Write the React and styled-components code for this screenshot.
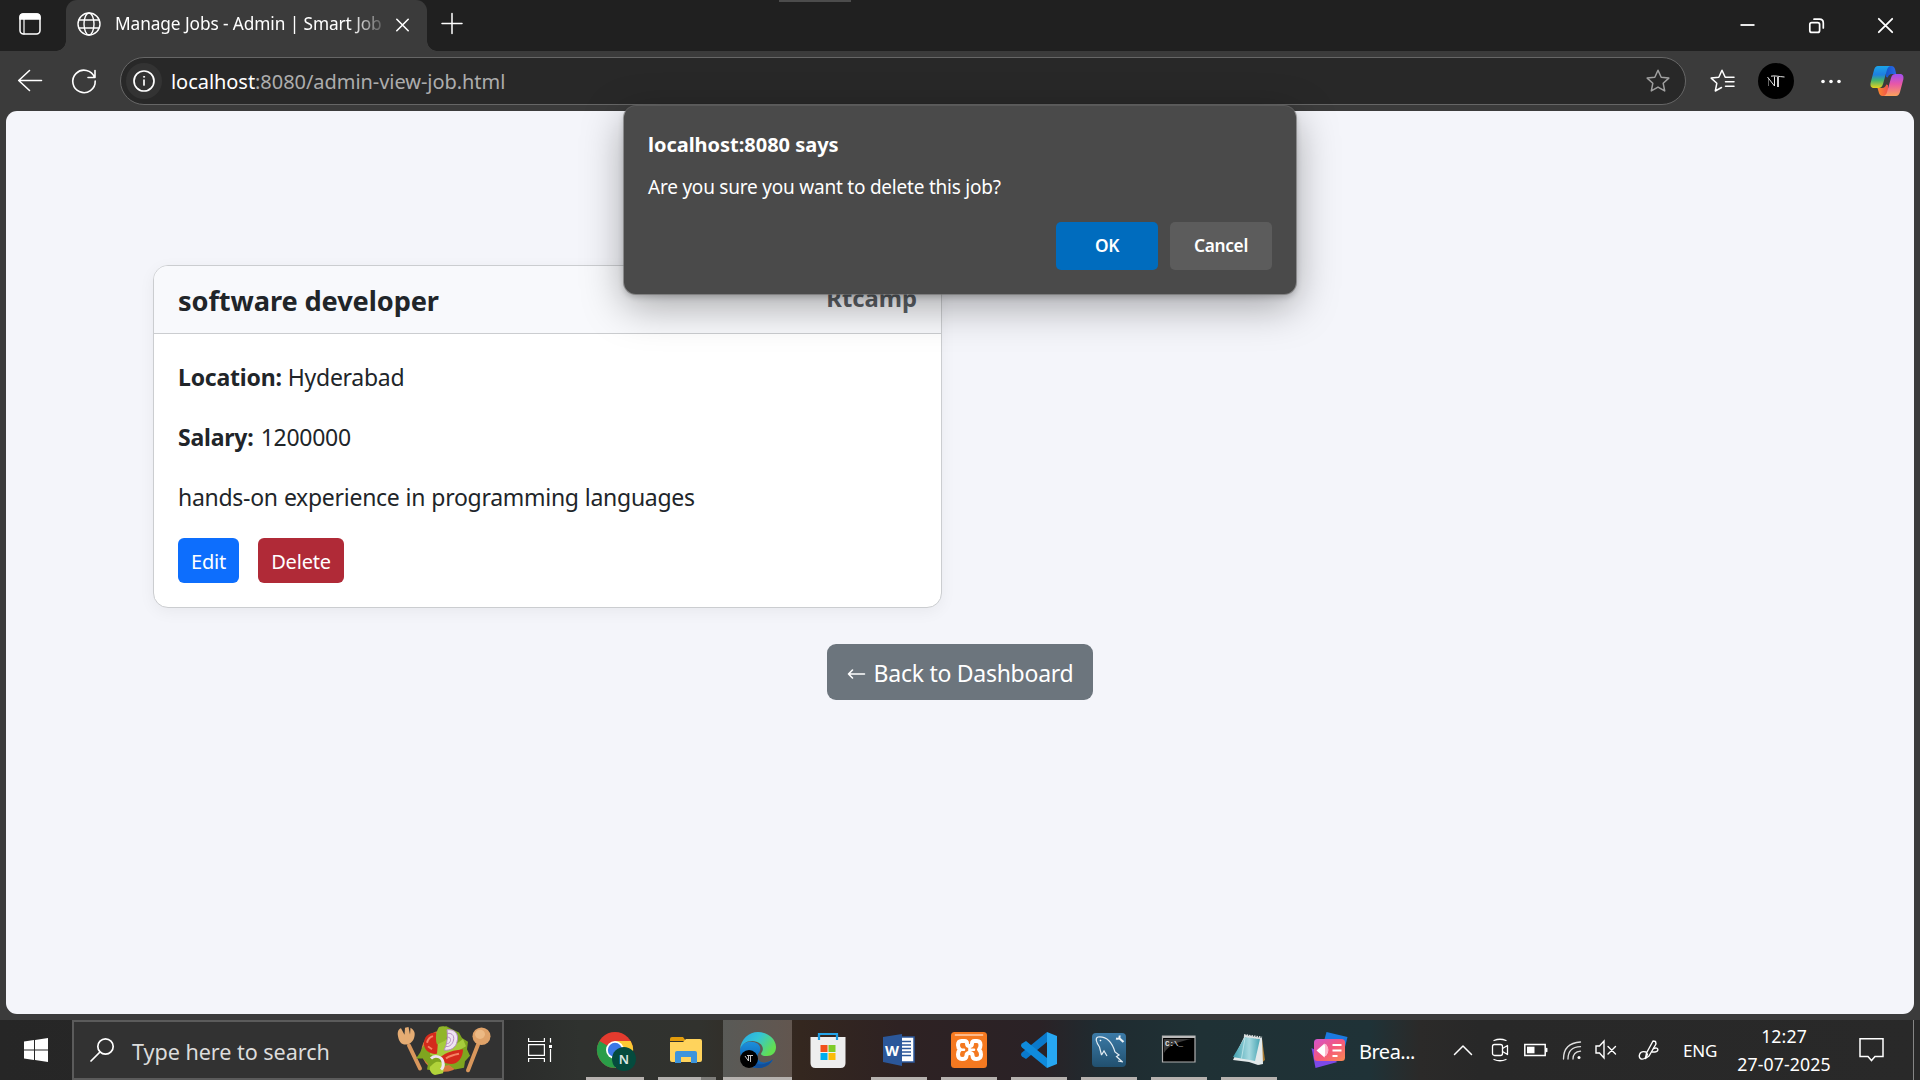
import React from "react";
import styled, { createGlobalStyle } from "styled-components";

const GlobalStyle = createGlobalStyle`
  * { box-sizing: border-box; }
  html, body { margin: 0; padding: 0; overflow: hidden; }
  body { font-family: "Noto Sans", "Open Sans", sans-serif; background: #3b3b3b; }
  button { font-family: inherit; border: 0; margin: 0; padding: 0; }
  svg { display: block; flex: none; overflow: visible; }
`;

const Screen = styled.div`
  width: 1920px;
  height: 1080px;
  display: flex;
  flex-direction: column;
  background: #3b3b3b;
  position: relative;
  white-space: nowrap;
`;

/* ---------- browser chrome ---------- */
const TabStrip = styled.header`
  height: 51px;
  flex: none;
  display: flex;
  background: #202020;
  color: #fff;
`;
const StripHandle = styled.div`
  position: absolute;
  top: 0;
  left: 779px;
  width: 72px;
  height: 2px;
  background: #4c4c4c;
`;
const TabActions = styled.div`
  width: 66px;
  display: flex;
  align-items: center;
  padding-left: 18px;
  padding-bottom: 3px;
`;
const Tab = styled.div`
  width: 361px;
  height: 51px;
  display: flex;
  align-items: center;
  padding: 0 18px 3px 11px;
  background: #3b3b3b;
  border-radius: 11px 11px 0 0;
  position: relative;
  &::before, &::after {
    content: "";
    position: absolute;
    bottom: 0;
    width: 10px;
    height: 10px;
  }
  &::before { left: -10px; background: radial-gradient(circle at 0 0, #202020 9.5px, #3b3b3b 10px); }
  &::after { right: -10px; background: radial-gradient(circle at 100% 0, #202020 9.5px, #3b3b3b 10px); }
`;
const TabTitle = styled.span`
  flex: 1;
  margin: 0 13px 0 14px;
  overflow: hidden;
  font-size: 17.3px;
  letter-spacing: -0.1px;
  line-height: 24px;
  -webkit-mask-image: linear-gradient(90deg, #000 236px, transparent 274px);
  mask-image: linear-gradient(90deg, #000 236px, transparent 274px);
`;
const NewTab = styled.div`
  padding: 13px 0 0 15px;
`;
const WindowControls = styled.div`
  margin-left: auto;
  display: flex;
  gap: 54px;
  padding: 18px 27px 0 0;
`;
const Toolbar = styled.div`
  height: 60px;
  flex: none;
  display: flex;
  align-items: center;
  padding: 0 16px 0 18px;
  color: #fff;
`;
const NavButtons = styled.div`
  width: 102px;
  display: flex;
  gap: 30px;
`;
const AddressBar = styled.div`
  width: 1566px;
  height: 48px;
  display: flex;
  align-items: center;
  padding: 0 15px 0 5px;
  border: 1.5px solid #666;
  border-radius: 24px;
  background: #282828;
`;
const SiteInfo = styled.div`
  width: 36px;
  height: 36px;
  display: grid;
  place-items: center;
  border-radius: 50%;
  background: #333;
`;
const Url = styled.span`
  margin-left: 9px;
  flex: 1;
  font-size: 20px;
  letter-spacing: -0.05px;
  line-height: 30px;
  padding-top: 2px;
  color: #adadad;
  b { font-weight: 400; color: #fff; }
`;
const BrowserTools = styled.div`
  display: grid;
  grid-template-columns: 48px 63px 49px 34px;
  align-items: center;
  padding-left: 24px;
`;
const Avatar = styled.div`
  width: ${(p) => p.$size}px;
  height: ${(p) => p.$size}px;
  border-radius: 50%;
  display: grid;
  place-items: center;
  background: #000;
`;

/* ---------- page ---------- */
const Viewport = styled.main`
  height: 903px;
  margin: 0 6px;
  flex: none;
  display: flex;
  flex-direction: column;
  align-items: center;
  padding-top: 154px;
  border-radius: 11px;
  background: #f4f5fa;
  overflow: hidden;
  color: #212529;
`;
const JobGrid = styled.section`
  width: 1614px;
  display: flex;
`;
const JobCard = styled.article`
  width: 789px;
  height: 343px;
  border: 1px solid #cbcdd0;
  border-radius: 15px;
  background: #fff;
  box-shadow: 0 4px 16px rgba(0, 0, 0, 0.05);
  display: flex;
  flex-direction: column;
`;
const CardHeader = styled.div`
  height: 68px;
  flex: none;
  display: flex;
  justify-content: space-between;
  align-items: center;
  padding: 2px 24px 0;
  border-bottom: 1px solid #cbcdd0;
  border-radius: 14px 14px 0 0;
  background: #f8f9fc;
`;
const JobTitle = styled.h5`
  margin: 0;
  font-size: 27.2px;
  line-height: 36px;
  font-weight: 700;
  letter-spacing: -0.1px;
`;
const Company = styled.strong`
  font-size: 23.8px;
  line-height: 36px;
  margin-bottom: 6px;
  color: #5b6065;
`;
const CardBody = styled.div`
  padding: 25px 24px 0;
`;
const JobLine = styled.p`
  margin: 0 0 24px;
  font-size: 23px;
  line-height: 36px;
  letter-spacing: -0.28px;
  word-spacing: 0.4px;
  strong { letter-spacing: -0.2px; margin-right: ${(p) => p.$labelGap || 0}px; }
`;
const CardActions = styled.div`
  display: flex;
  gap: 19px;
  margin-top: -1px;
`;
const SmallButton = styled.button`
  width: ${(p) => p.$width}px;
  height: 45px;
  border-radius: 6px;
  background: ${(p) => (p.$danger ? "#b02a37" : "#0d6efd")};
  color: #fff;
  font-size: 20px;
  letter-spacing: -0.2px;
  line-height: 45px;
  padding-top: 1px;
`;
const BackButton = styled.button`
  width: 266px;
  height: 56px;
  margin-top: 36px;
  display: flex;
  align-items: center;
  justify-content: center;
  gap: 9px;
  padding: 2px 0 0 0;
  border-radius: 9px;
  background: #6c757d;
  color: #fff;
  font-size: 23px;
  letter-spacing: -0.27px;
`;

/* ---------- confirm dialog ---------- */
const Dialog = styled.div`
  position: absolute;
  left: 624px;
  top: 106px;
  width: 672px;
  height: 188px;
  padding: 24px;
  border-radius: 12px;
  background: #4a4a4a;
  box-shadow: 0 0 0 1px rgba(110, 110, 110, 0.65), 0 12px 42px rgba(0, 0, 0, 0.34), 0 3px 6px rgba(0, 0, 0, 0.2);
  color: #fff;
  display: flex;
  flex-direction: column;
`;
const DialogTitle = styled.h2`
  margin: 0;
  font-size: 20px;
  line-height: 30px;
  font-weight: 700;
  letter-spacing: -0.02px;
`;
const DialogText = styled.p`
  margin: 13px 0 0;
  font-size: 19px;
  line-height: 28px;
  letter-spacing: -0.22px;
`;
const DialogActions = styled.div`
  display: flex;
  justify-content: flex-end;
  gap: 12px;
  margin-top: 21px;
`;
const DialogButton = styled.button`
  width: 102px;
  height: 48px;
  border-radius: 5px;
  background: ${(p) => (p.$primary ? "#006cbe" : "#5c5c5c")};
  color: #fff;
  font-size: 17.3px;
  font-weight: 600;
  letter-spacing: -0.3px;
  padding-bottom: 2px;
`;

/* ---------- taskbar ---------- */
const Taskbar = styled.footer`
  height: 60px;
  margin-top: auto;
  flex: none;
  display: flex;
  color: #fff;
  background: linear-gradient(90deg, #262626 0, #292929 480px, #2f322f 580px, #31322e 700px, #34271f 800px, #2e2223 900px, #2a2226 1040px, #1f2b30 1100px, #1f3135 1200px, #1f3237 1370px, #2b2a29 1420px, #282828 1480px, #292929 1920px);
`;
const StartButton = styled.div`
  width: 72px;
  display: grid;
  place-items: center;
`;
const SearchBox = styled.div`
  width: 432px;
  height: 60px;
  display: flex;
  align-items: center;
  padding: 0 11px 0 16px;
  border: 2px solid #5b5b5b;
  background: #323232;
`;
const SearchHint = styled.span`
  flex: 1;
  margin-left: 18px;
  font-size: 21.6px;
  letter-spacing: -0.05px;
  padding-top: 3px;
  color: #dcdcdc;
`;
const SearchArt = styled.div`
  padding-top: 1px;
`;
const TaskView = styled.div`
  width: 75px;
  display: grid;
  place-items: center;
  padding-right: 3px;
`;
const AppList = styled.nav`
  display: grid;
  grid-template-columns: 72px 72px 69px 72px repeat(6, 70px);
`;
const AppButton = styled.div`
  position: relative;
  display: flex;
  justify-content: center;
  padding-top: 12px;
  padding-right: ${(p) => (p.$stacked ? 2 : 0)}px;
  background: ${(p) => (p.$active ? "linear-gradient(90deg, #595a57, #62564f)" : "none")};
  &::after {
    content: "";
    display: ${(p) => (p.$running ? "block" : "none")};
    position: absolute;
    left: ${(p) => (p.$active ? 0 : 7)}px;
    right: ${(p) => (p.$active ? 0 : 7)}px;
    bottom: 0;
    height: 3px;
    background: ${(p) => (p.$stacked ? "linear-gradient(90deg, #b3b1ae 43px, #7e7d7a 43px)" : "#b6b2af")};
  }
`;
const NewsWidget = styled.div`
  display: flex;
  align-items: center;
  margin-left: 27px;
  gap: 11px;
  width: 134px;
  font-size: 20px;
  letter-spacing: -0.5px;
  span { padding-top: 3px; }
`;
const Tray = styled.div`
  display: grid;
  grid-template-columns: 36px 38px 33px 40px 28px 58px 44px 124px 50px;
  align-items: center;
  justify-items: center;
  height: 60px;
`;
const Language = styled.span`
  font-size: 17px;
  letter-spacing: -0.2px;
`;
const Clock = styled.div`
  display: flex;
  flex-direction: column;
  align-items: center;
  padding-bottom: 1px;
  font-size: 17.7px;
  line-height: 28px;
  letter-spacing: 0.1px;
`;
const ShowDesktop = styled.div`
  width: 7px;
  margin-left: auto;
  border-left: 1px solid #858585;
`;

/* ---------- icons ---------- */
const Line = ({ w = 24, h = 24, sw = 1.5, children, color = "currentColor" }) => (
  <svg width={w} height={h} viewBox={`0 0 ${w} ${h}`} fill="none" stroke={color} strokeWidth={sw} strokeLinecap="round" strokeLinejoin="round">
    {children}
  </svg>
);
const STAR = "M12 1.2l3.2 7 7.6.9-5.6 5.2 1.5 7.6L12 18.1l-6.7 3.8 1.5-7.6L1.2 9.1l7.6-.9z";

const Monogram = ({ w }) => (
  <svg width={w} height={w} viewBox="0 0 36 36" fill="none" stroke="#fff" strokeWidth="1">
    <path d="M10.500 23V15.500" opacity=".4" />
    <path d="M9.500 14l7 9V13.500" opacity=".9" />
    <path d="M13 13.200c4-.9 8 .5 13.500.8" opacity=".9" />
    <path d="M20 14v10" strokeWidth="1.600" />
  </svg>
);

const Copilot = () => (
  <svg width="34" height="32" viewBox="0 0 34 32">
    <defs>
      <linearGradient id="cpa" x1="0" y1="0" x2="0" y2="1">
        <stop offset="0" stopColor="#1ba4e8" /><stop offset=".4" stopColor="#1f7fe0" /><stop offset=".65" stopColor="#43b36f" /><stop offset="1" stopColor="#e8d21d" />
      </linearGradient>
      <linearGradient id="cpb" x1="0" y1="0" x2="0" y2="1">
        <stop offset="0" stopColor="#a04ef0" /><stop offset=".45" stopColor="#e857a8" /><stop offset="1" stopColor="#fba25b" />
      </linearGradient>
      <linearGradient id="cpc"><stop offset="0" stopColor="#1554c8" /><stop offset="1" stopColor="#2b6be8" /></linearGradient>
      <linearGradient id="cpd"><stop offset="0" stopColor="#fb8a2e" /><stop offset="1" stopColor="#f0524a" /></linearGradient>
    </defs>
    <path d="M16 1h5.500c2.200 0 3 1.300 3.600 3.200L26.200 9H22c-2.400 0-3.600 1.400-4.200 3.500L16 12z" fill="url(#cpc)" />
    <path d="M18 31h-5.500c-2.200 0-3-1.300-3.600-3.200L7.500 23H12c2.400 0 3.600-1.400 4.200-3.500L18 20z" fill="url(#cpd)" />
    <path d="M8 1h12.500c-2 .3-3 2-3.700 4.500L13 19c-.8 2.700-2 4-4.500 4H4C.8 23 0 20.500.7 17.500L4 5c.8-2.600 2-4 4-4z" fill="url(#cpa)" />
    <path d="M26 31H13.500c2-.3 3-2 3.700-4.500L21 13c.8-2.700 2-4 4.500-4H30c3.200 0 4 2.500 3.300 5.500L30 27c-.8 2.600-2 4-4 4z" fill="url(#cpb)" />
  </svg>
);

const Salad = () => (
  <svg width="94" height="50" viewBox="0 0 94 54" preserveAspectRatio="none">
    <path d="M12 21l11 25" stroke="#d9975c" strokeWidth="4" strokeLinecap="round" />
    <path d="M1 11C0 6 2 3 4 2.500l3.500 7L8 2l3.500-.8 1.500 8L13.500 2c3 2 5 5 4 9-1 6-5 9-9 9S2 17 1 11z" fill="#e5ac73" />
    <path d="M81 20L71 48" stroke="#d9975c" strokeWidth="4" strokeLinecap="round" />
    <ellipse cx="84.500" cy="11" rx="9" ry="9.500" fill="#dfa269" />
    <ellipse cx="83" cy="9" rx="5" ry="5" fill="#ecb984" />
    <circle cx="47" cy="27" r="22.500" fill="#d9773f" />
    <path d="M42 5l7-5 7 4 6 3 3 6 6 4-1 8 3 7-5 6-1 7-9 2-6-5-8 2-5 5-9-2 1-6-5-6-7 0 4-6 3-7 8-2z" fill="#7fa51f" />
    <path d="M34 24l14-10 12 5 6-5 3 8-10 6-14 6-12-3z" fill="#a6cc3c" />
    <path d="M36 41c4-4 8-2 12 0l-2 10-8 2c-4-1-6-6-5-9z" fill="#b1d33a" />
    <path d="M27 17c1-7 6-10 12-10l2 10-1 13c-7 1-14-4-13-13z" fill="#d42a1c" />
    <path d="M30 18c1-4 3-6 6-7M31 22l4 3" stroke="#f58465" strokeWidth="2" fill="none" />
    <path d="M43 34c6-6 14-8 23-9 0 9-5 16-12 16-5 0-10-3-11-7z" fill="#d42a1c" />
    <path d="M49 35c4-3 8-4 13-5" stroke="#f58465" strokeWidth="2" fill="none" />
    <path d="M42 1c6-2 10 1 10 6l-4 9-8 4c-2-7-1-14 2-19z" fill="#91b629" />
    <g fill="none" stroke="#b68ac0" strokeWidth="1">
      <path d="M50 4c9-1 12 6 10 13-1 6-6 10-13 9 3-6 4-14 3-22z" fill="#eee4f1" />
      <path d="M50 8c6-1 8 4 6 9-1 3-4 6-7 5M50 12c4 0 4 3 3 5s-2 2-4 2" />
      <path d="M34 35c4-4 11-2 12 4s-1 7-2 8" stroke="#eee4f1" strokeWidth="3" />
    </g>
  </svg>
);

const Chrome = () => (
  <svg width="36" height="39" viewBox="0 0 36 39">
    <circle cx="18" cy="18" r="18" fill="#e33b2e" />
    <path d="M18 18L2.400 9A18 18 0 0 0 18 36l8-14z" fill="#2a9d48" />
    <path d="M18 9h15.600A18 18 0 0 1 18 36l8-14z" fill="#fcc934" />
    <circle cx="18" cy="18" r="9" fill="#fff" /><circle cx="18" cy="18" r="7.200" fill="#3b78e7" />
    <circle cx="27" cy="27" r="12" fill="#054b3e" />
    <text x="27" y="32" textAnchor="middle" fontSize="13" fontWeight="600" fill="#dbe6e3">N</text>
  </svg>
);
const Explorer = () => (
  <svg width="32" height="36" viewBox="0 0 32 36">
    <path d="M0 7q0-2 2-2h11l3 4H0z" fill="#e29c0c" />
    <path d="M0 10h13l3-3h14q2 0 2 2v19q0 2-2 2H2q-2 0-2-2z" fill="#ffd35c" />
    <path d="M5 31V21q0-2 2-2h18q2 0 2 2v10h-6v-6H11v6z" fill="#3d94dc" />
  </svg>
);
const Edge = () => (
  <svg width="36" height="36" viewBox="0 0 36 36">
    <defs>
      <linearGradient id="eda" x1="0" y1="0" x2="1" y2=".5"><stop offset="0" stopColor="#27a5e5" /><stop offset=".5" stopColor="#34c4d6" /><stop offset="1" stopColor="#62df52" /></linearGradient>
      <linearGradient id="edb" x1="0" y1="0" x2="0" y2="1"><stop offset="0" stopColor="#1c90dc" /><stop offset="1" stopColor="#0b55a8" /></linearGradient>
    </defs>
    <path d="M0 18C1 11 8 9 13 10c8 1 9 8 5 12-2 6 3 10 9 8l6-2c-3 5-8 8-15 8C7 36 0 28 0 18z" fill="url(#edb)" />
    <path d="M13 22c-1 7 4 12 11 10 4-1 7-3 9-5-3 6-9 9-15 9-6-2-8-9-5-14z" fill="#134e97" />
    <path d="M0 17C1 7 9 0 18 0c10 0 18 7 18 15 0 6-4 9-9 9-6 0-7-2-5-4 3-5-2-11-10-11C6 9 2 12 0 17z" fill="url(#eda)" />
    <circle cx="9" cy="27" r="9" fill="#000" />
    <path d="M5 24l3.500 5v-5M7 23.500h6M10.500 24v6" stroke="#ddd" strokeWidth=".9" fill="none" />
  </svg>
);
const Store = () => (
  <svg width="36" height="36" viewBox="0 0 36 36">
    <path d="M9 8V2h18v6" stroke="#24a5ea" strokeWidth="2.200" fill="none" />
    <path d="M.500 5h35v26q0 5-5 5h-25q-5 0-5-5z" fill="#eee" />
    <path d="M9 8V3M27 8V3" stroke="#1b98dd" strokeWidth="2.200" />
    <path d="M10.500 13h7v7h-7z" fill="#f1511b" /><path d="M18.500 13h7v7h-7z" fill="#80cc28" />
    <path d="M10.500 21h7v7h-7z" fill="#00adef" /><path d="M18.500 21h7v7h-7z" fill="#fbbc09" />
  </svg>
);
const Word = () => (
  <svg width="32" height="36" viewBox="0 0 32 36">
    <path d="M17 5h14v25H17z" fill="#fff" stroke="#2b579a" strokeWidth="1.500" />
    <path d="M19 9.500h9M19 13h9M19 16.500h9M19 20h9M19 23.500h9" stroke="#2b579a" strokeWidth="1.400" />
    <path d="M0 5l19-3v32L0 30z" fill="#2b579a" />
    <text x="9" y="23.500" textAnchor="middle" fontSize="14.500" fontWeight="700" fill="#fff">W</text>
  </svg>
);
const Xampp = () => (
  <svg width="36" height="36" viewBox="0 0 36 36">
    <rect width="36" height="36" rx="3.500" fill="#f47920" />
    <path d="M4 2h28q1 2-1 2H5q-2 0-1-2z" fill="#fbb98a" />
    <path
      d="M10.500 9h3q2.500 0 2.500 2.500t2.500 2.500 2.500-2.500T23.500 9H26q3.500 0 3.500 4 0 3-1.500 4.500 2 2 2 5 0 4.500-4.500 4.500-4 0-4-3.500 0-2.500-3-2.500t-3 2.500q0 3.500-4.500 3.500Q7 27 7 22.500q0-3 2-5Q7 16 7 13q0-4 3.500-4z"
      fill="#f47920" stroke="#fff" strokeWidth="4" strokeLinejoin="round"
    />
    <path d="M9 17.800h4M18.500 16v4M23 17.800h-4" stroke="#fff" strokeWidth="2.600" strokeLinecap="round" />
  </svg>
);
const VSCode = () => (
  <svg width="36" height="36" viewBox="0 0 36 36">
    <path d="M26 0l10 4v28l-10 4z" fill="#27a7f2" />
    <path d="M26 0v10L5 27l-4-2.500q-2-2 0-4z" fill="#0a79cb" />
    <path d="M26 36V26L5 9l-4 2.500q-2 2 0 4z" fill="#0f8bdc" />
  </svg>
);
const Workbench = () => (
  <svg width="34" height="36" viewBox="0 0 34 36" fill="none">
    <defs><linearGradient id="wba" x1="0" y1="0" x2="0" y2="1"><stop offset="0" stopColor="#3c7ba8" /><stop offset="1" stopColor="#21506f" /></linearGradient></defs>
    <rect y="1" width="34" height="34" rx="4" fill="url(#wba)" />
    <path d="M9.500 23L7.500 15C4 10 3 6 6 5c9-1 14 5 17 15l4 3-2.500 1.500 6 5.500M26 29l5 1M9.500 23l2.500-4 3 5" stroke="#e4edf3" strokeWidth="1.200" />
    <path d="M8 8l1 1" stroke="#fff" strokeWidth="1.500" />
    <path d="M27 6l4.500 4" stroke="#eef4f8" strokeWidth="2.200" />
    <path d="M27.500 3.500q1 4-3.500 3" stroke="#eef4f8" strokeWidth="2" />
  </svg>
);
const Terminal = () => (
  <svg width="34" height="36" viewBox="0 0 34 36">
    <path d="M.5 4h32.500v26H.5z" fill="#000" stroke="#b0b0b0" strokeWidth="1.200" />
    <path d="M1 4h32v2H1z" fill="#b9b9b9" /><path d="M2 7h28C18 9 6 13 2 21z" fill="#3b3b3b" />
    <text x="3" y="13.500" fontSize="7.500" fontFamily="Liberation Mono, monospace" fontWeight="700" fill="#e0e0e0">C:\_</text>
  </svg>
);
const Notepad = () => (
  <svg width="34" height="36" viewBox="0 0 34 36">
    <defs><linearGradient id="npa"><stop offset="0" stopColor="#3f9fae" /><stop offset=".6" stopColor="#a5d9e0" /><stop offset="1" stopColor="#4aa5b3" /></linearGradient></defs>
    <path d="M30 7l3 21-6 5z" fill="#a87b35" />
    <path d="M13 3l17 3 1 26-5 1-9-3-16-2z" fill="#e3e9ea" />
    <path d="M13 5l15 2-5 22L1 25z" fill="url(#npa)" />
    <path d="M13 6L9.500 26.500" stroke="#c5eaee" strokeWidth=".8" />
    <path d="M12 3.500l18 2.500" stroke="#d7dcdc" strokeWidth="3" strokeDasharray="1.500 1" />
  </svg>
);
const News = () => (
  <svg width="37" height="36" viewBox="0 0 36 36">
    <defs>
      <linearGradient id="nwa" x1="0" y1="0" x2="1" y2="1"><stop offset="0" stopColor="#d254d0" /><stop offset=".5" stopColor="#f4577d" /><stop offset="1" stopColor="#fb8a52" /></linearGradient>
    </defs>
    <path d="M15 0l21 5-5 20L10 18z" fill="#1c7ae0" />
    <path d="M0 16l4 20 22-6z" fill="#7d49e8" />
    <rect x="2.500" y="7" width="31" height="22" rx="3.500" fill="url(#nwa)" />
    <path d="M5 18.500l8-7q2 7 0 14z" fill="#fff" /><path d="M14 12q5 6 0 12z" fill="#fdb8cc" stroke="#fdb8cc" />
    <path d="M21 13h9M21 18.500h9M21 24h5" stroke="#fff" strokeWidth="2" />
  </svg>
);

const APPS = [
  { id: "chrome", icon: <Chrome />, running: true },
  { id: "explorer", icon: <Explorer />, running: true, stacked: true },
  { id: "edge", icon: <Edge />, running: true, active: true },
  { id: "store", icon: <Store /> },
  { id: "word", icon: <Word />, running: true },
  { id: "xampp", icon: <Xampp />, running: true },
  { id: "vscode", icon: <VSCode />, running: true },
  { id: "workbench", icon: <Workbench />, running: true },
  { id: "terminal", icon: <Terminal />, running: true },
  { id: "notepad", icon: <Notepad />, running: true },
];

export default function App() {
  return (
    <Screen>
      <GlobalStyle />
      <TabStrip>
        <TabActions>
          <Line>
            <rect x="2" y="2" width="20" height="20" rx="3.500" />
            <path d="M2 7V5q0-3 3-3h14q3 0 3 3v2z" fill="currentColor" />
            <path d="M6 7v15" strokeWidth="1.200" />
          </Line>
        </TabActions>
        <Tab>
          <Line sw={1.4}>
            <circle cx="12" cy="12" r="11" /><ellipse cx="12" cy="12" rx="5" ry="11" />
            <path d="M2 8h20M2 16h20" />
          </Line>
          <TabTitle>Manage Jobs - Admin | Smart Job</TabTitle>
          <Line w={13} h={13} sw={1.6}><path d="M.8 1.300l11.400 11.400M12.200 1.300L.8 12.700" /></Line>
        </Tab>
        <NewTab><Line w={21} h={21}><path d="M10 .5v20M0 10.500h20" /></Line></NewTab>
        <WindowControls>
          <Line w={15} h={15} sw={1.8}><path d="M.5 7h14" strokeLinecap="butt" /></Line>
          <Line w={15} h={15} sw={1.7}>
            <rect x=".8" y="4.600" width="9.800" height="9.800" rx="2" />
            <path d="M5 1.200h5.500q3.800 0 3.800 3.800v5" />
          </Line>
          <Line w={15} h={15} sw={1.8}><path d="M.8.8l13.400 13.400M14.200.8L.8 14.200" /></Line>
        </WindowControls>
      </TabStrip>
      <StripHandle />

      <Toolbar>
        <NavButtons>
          <Line sw={1.6}><path d="M23.500 11.500H.7M11.500 1.500l-10.800 10 10.800 10" /></Line>
          <Line sw={1.6}><path d="M22.500 8.500A11.200 11.200 0 1 0 23.200 12M23 1.500v7h-7" /></Line>
        </NavButtons>
        <AddressBar>
          <SiteInfo>
            <Line w={22} h={22} sw={1.7}><circle cx="11" cy="11" r="10" /><path d="M11 10v5" /><circle cx="11" cy="6.800" r=".6" fill="currentColor" strokeWidth=".8" /></Line>
          </SiteInfo>
          <Url><b>localhost</b>:8080/admin-view-job.html</Url>
          <Line color="#a0a0a0"><path d={STAR} /></Line>
        </AddressBar>
        <BrowserTools>
          <Line>
            <path d="M11.500 18.500l-6.200 3.500 1.500-7.700L1.200 9.100l7.600-.9 3.200-7 3.200 7H24" />
            <path d="M15.500 12.700H24M15.500 17.200H24" />
          </Line>
          <Avatar $size={36}><Monogram w={36} /></Avatar>
          <svg width="20" height="6" viewBox="0 0 20 6" fill="#fff"><circle cx="2" cy="3.500" r="1.800" /><circle cx="10" cy="3.500" r="1.800" /><circle cx="18" cy="3.500" r="1.800" /></svg>
          <Copilot />
        </BrowserTools>
      </Toolbar>

      <Viewport>
        <JobGrid>
          <JobCard>
            <CardHeader>
              <JobTitle>software developer</JobTitle>
              <Company>Rtcamp</Company>
            </CardHeader>
            <CardBody>
              <JobLine><strong>Location:</strong> Hyderabad</JobLine>
              <JobLine $labelGap={1}><strong>Salary:</strong> 1200000</JobLine>
              <JobLine>hands-on experience in programming languages</JobLine>
              <CardActions>
                <SmallButton $width={61}>Edit</SmallButton>
                <SmallButton $width={86} $danger>Delete</SmallButton>
              </CardActions>
            </CardBody>
          </JobCard>
        </JobGrid>
        <BackButton>
          <Line w={18} h={12} sw={1.6}><path d="M17.500 7H1.500M5.500 3L1.500 7l4 4" /></Line>
          <span>Back to Dashboard</span>
        </BackButton>
      </Viewport>

      <Dialog role="dialog">
        <DialogTitle>localhost:8080 says</DialogTitle>
        <DialogText>Are you sure you want to delete this job?</DialogText>
        <DialogActions>
          <DialogButton $primary>OK</DialogButton>
          <DialogButton>Cancel</DialogButton>
        </DialogActions>
      </Dialog>

      <Taskbar>
        <StartButton>
          <svg width="24" height="24" viewBox="0 0 24 24" fill="#fff">
            <path d="M0 3.500l10-1.400v9.400H0zM11 2L24 .1v11.400H11zM0 12.500h10v9.400L0 20.500zM11 12.500h13v11.400L11 22z" />
          </svg>
        </StartButton>
        <SearchBox>
          <Line sw={1.7}><circle cx="15.500" cy="8.500" r="7.700" /><path d="M10 14L1 23" /></Line>
          <SearchHint>Type here to search</SearchHint>
          <SearchArt><Salad /></SearchArt>
        </SearchBox>
        <TaskView>
          <svg width="24" height="24" viewBox="0 0 24 24" fill="none" stroke="#fff" strokeWidth="1.200">
            <path d="M.6 0v3.500h15.800V0M.6 6.600h15.800v10.800H.6zM.6 24v-3.500h15.800V24M22.500 0v4.500M22.500 11v13" />
            <path d="M21 7h3v3h-3z" fill="#fff" stroke="none" />
          </svg>
        </TaskView>
        <AppList>
          {APPS.map((a) => (
            <AppButton key={a.id} $running={a.running} $active={a.active} $stacked={a.stacked}>{a.icon}</AppButton>
          ))}
        </AppList>
        <NewsWidget>
          <News />
          <span>Brea...</span>
        </NewsWidget>
        <Tray>
          <Line w={20} h={12} sw={1.5}><path d="M1.500 10.500l8.500-8.500 8.500 8.500" /></Line>
          <Line w={18} h={24} sw={1.3}>
            <rect x="1.500" y="6.500" width="10" height="11" rx="2" /><path d="M11.500 10.500l5-3v9l-5-3M3 2.500q6-2.500 12 0M3 21.500q6 2.500 12 0" />
          </Line>
          <Line w={24} h={14} sw={1.5}>
            <path d="M.8 1.500h20.400v11H.8zM22.700 5.500v3" strokeLinejoin="miter" /><path d="M3 3.700h7.500v6.600H3z" fill="#fff" stroke="none" />
          </Line>
          <Line w={20} h={20} sw={1.300}>
            <path d="M1.500 19q0-16 17-17M6 19q0-12 12.500-12.300M11 19q0-7 7.500-7.800" opacity=".85" /><circle cx="17" cy="17.500" r="1.500" fill="#fff" stroke="none" />
          </Line>
          <Line w={22} h={20} sw={1.4}>
            <path d="M1 6h3.500L9 1v17l-4.500-5H1zM13 6.500l7.500 7.500M20.500 6.500L13 14" strokeLinejoin="miter" />
          </Line>
          <Line w={20} h={20} sw={1.4}>
            <path d="M7.500 13L14 1l2.500.500.5 2.500-7 12-3.500 2.500z" />
            <path d="M7 12c-7-2-8 5-5 7 4 1 6-3 6.500-5M14.500 8.500c5-2 6 3 1.500 3.500h-3" />
          </Line>
          <Language>ENG</Language>
          <Clock><span>12:27</span><span>27-07-2025</span></Clock>
          <Line w={25} h={24} sw={1.5}><path d="M1 .8h23v17.700h-8L12.500 22.500 9 18.500H1z" strokeLinejoin="miter" /></Line>
        </Tray>
        <ShowDesktop />
      </Taskbar>
    </Screen>
  );
}
